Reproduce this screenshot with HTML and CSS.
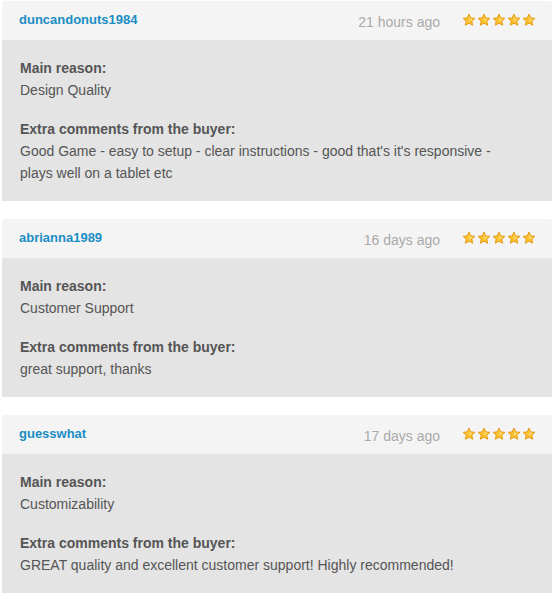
FILE: index.html
```html
<!DOCTYPE html>
<html lang="en">
<head>
    <meta charset="UTF-8">
    <meta name="viewport" content="width=device-width, initial-scale=1.0">
    <title>Reviews</title>
    <link rel="stylesheet" href="styles.css">
</head>
<body>
    <svg width="0" height="0" style="position:absolute">
        <defs>
            <symbol id="star" viewBox="0 0 16 16">
                <path d="M8 1.2 L10 5.6 L14.8 6.1 L11.2 9.3 L12.2 14 L8 11.6 L3.8 14 L4.8 9.3 L1.2 6.1 L6 5.6 Z" fill="#fbc02d" stroke="#e39a12" stroke-width="1.1" stroke-linejoin="round"/>
                <path d="M8 3.2 L9.3 6.4 L12.6 6.8 L10.2 9 L7.9 9.8 Z" fill="#ffe082" opacity="0.7"/>
            </symbol>
        </defs>
    </svg>

    <div class="review">
        <div class="review-header">
            <span class="buyer">duncandonuts1984</span>
            <span class="when">21 hours ago</span>
            <span class="stars">
                <svg><use href="#star"/></svg><svg><use href="#star"/></svg><svg><use href="#star"/></svg><svg><use href="#star"/></svg><svg><use href="#star"/></svg>
            </span>
        </div>
        <div class="review-body">
            <div class="block">
                <div class="label">Main reason:</div>
                <div>Design Quality</div>
            </div>
            <div class="block">
                <div class="label">Extra comments from the buyer:</div>
                <div>Good Game - easy to setup - clear instructions - good that's it's responsive - plays well on a tablet etc</div>
            </div>
        </div>
    </div>

    <div class="review">
        <div class="review-header">
            <span class="buyer">abrianna1989</span>
            <span class="when">16 days ago</span>
            <span class="stars">
                <svg><use href="#star"/></svg><svg><use href="#star"/></svg><svg><use href="#star"/></svg><svg><use href="#star"/></svg><svg><use href="#star"/></svg>
            </span>
        </div>
        <div class="review-body">
            <div class="block">
                <div class="label">Main reason:</div>
                <div>Customer Support</div>
            </div>
            <div class="block">
                <div class="label">Extra comments from the buyer:</div>
                <div>great support, thanks</div>
            </div>
        </div>
    </div>

    <div class="review">
        <div class="review-header">
            <span class="buyer">guesswhat</span>
            <span class="when">17 days ago</span>
            <span class="stars">
                <svg><use href="#star"/></svg><svg><use href="#star"/></svg><svg><use href="#star"/></svg><svg><use href="#star"/></svg><svg><use href="#star"/></svg>
            </span>
        </div>
        <div class="review-body">
            <div class="block">
                <div class="label">Main reason:</div>
                <div>Customizability</div>
            </div>
            <div class="block">
                <div class="label">Extra comments from the buyer:</div>
                <div>GREAT quality and excellent customer support! Highly recommended!</div>
            </div>
        </div>
    </div>
</body>
</html>
```

FILE: styles.css
```css
body {
    margin: 0;
    padding: 1px 2px;
    background: #fff;
    font-family: "Liberation Sans", Arial, sans-serif;
    font-size: 14px;
    color: #555;
}
.review {
    width: 550px;
    margin-bottom: 18px;
}
.review-header {
    display: flex;
    align-items: center;
    height: 39px;
    padding: 0 16px 0 17px;
    background: #f4f4f4;
    border-radius: 3px 3px 0 0;
}
.buyer {
    font-size: 13px;
    font-weight: bold;
    color: #1a8dc4;
    margin-top: -2px;
}
.when {
    margin-left: auto;
    margin-top: 2px;
    color: #aaa;
    font-size: 14px;
}
.stars {
    display: flex;
    gap: 1px;
    margin-left: 22px;
    margin-top: -1px;
}
.stars svg {
    width: 14px;
    height: 14px;
}
.review-body {
    background: #e4e4e4;
    padding: 17px 40px 17px 18px;
    line-height: 22px;
}
.block + .block {
    margin-top: 17px;
}
.label {
    font-weight: bold;
}
```
